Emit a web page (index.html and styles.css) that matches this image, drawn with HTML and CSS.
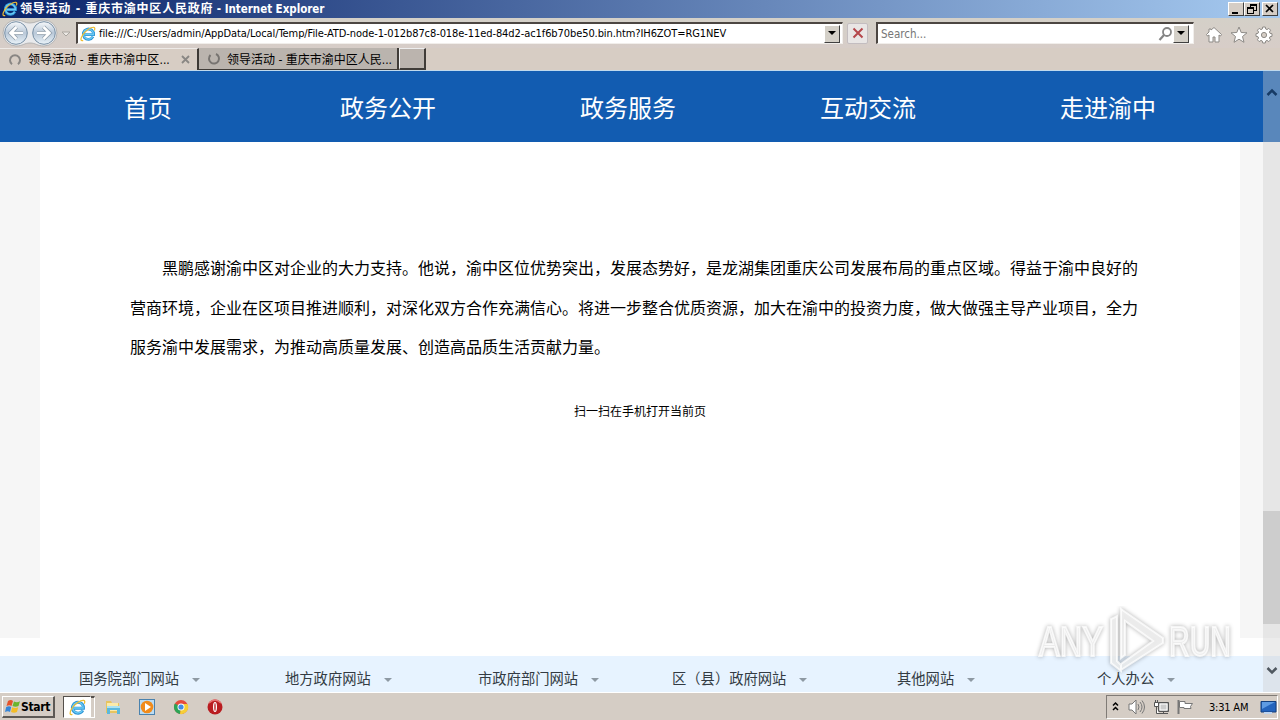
FILE: index.html
```html
<!DOCTYPE html>
<html lang="zh-CN">
<head>
<meta charset="utf-8">
<title>领导活动 - 重庆市渝中区人民政府</title>
<link rel="stylesheet" href="styles.css">
</head>
<body>
<svg class="defs" width="0" height="0">
  <defs>
    <linearGradient id="orb" x1="0" y1="0" x2="0" y2="1"><stop offset="0" stop-color="#f7f9fb"/><stop offset=".5" stop-color="#b9c8d8"/><stop offset="1" stop-color="#eaf3f9"/></linearGradient>
    <symbol id="ie" viewBox="0 0 16 16">
      <path d="M13 10.700A5.200 5.200 0 1 1 13.600 8.700H4.500" fill="none" stroke="#2d95d6" stroke-width="2.800"/>
      <path d="M12.700 10.700A5 5 0 1 1 13.400 8.500H4.500" fill="none" stroke="#6ccaf4" stroke-width="1.300"/>
      <path d="M3.200 14.500C.6 15.300.2 13 2.500 9.200 5.500 4.600 11 .9 13.800 1.300c1.400.3 1.200 1.800.5 3.200" fill="none" stroke="#eebd32" stroke-width="1.200"/>
    </symbol>
  </defs>
</svg>
<div class="screen">
  <header class="titlebar">
    <svg class="title-icon" width="16" height="16"><use href="#ie"/></svg>
    <span class="title-text"><span class="title-cjk">领导活动 - 重庆市渝中区人民政府</span> - Internet Explorer</span>
    <div class="window-buttons">
      <span class="win-btn"><svg width="14" height="12"><path d="M3 9h6v2H3z"/></svg></span>
      <span class="win-btn"><svg width="14" height="12"><path d="M5 1h7v7H9V7h2V3H6v1H5zM2 4h7v7H2zM3 6v4h5V6z" fill-rule="evenodd"/></svg></span>
      <span class="win-btn close"><svg width="14" height="12"><path d="M3 2l7 7M10 2L3 9" stroke="#000" stroke-width="1.700"/></svg></span>
    </div>
  </header>

  <div class="toolbar">
    <svg class="nav-orbs" width="74" height="30" viewBox="0 0 74 30">
      <path d="M15 2C22 2 23 5 29 5S37 2 43 2A13 13 0 0 1 43 28C36 28 35 25 29 25S22 28 15 28A13 13 0 0 1 15 2" fill="#e9eaec" stroke="#aaa" stroke-width=".8"/>
      <circle cx="15" cy="15" r="11.300" fill="url(#orb)" stroke="#7890a6"/>
      <circle cx="43" cy="15" r="11.300" fill="url(#orb)" stroke="#7890a6"/>
      <path d="M22 15H10M15.500 9l-6 6 6 6M36 15h12M42.500 9l6 6-6 6" fill="none" stroke="#8d9ba9" stroke-width="4"/>
      <path d="M22 15H10M15.500 9l-6 6 6 6M36 15h12M42.500 9l6 6-6 6" fill="none" stroke="#fff" stroke-width="2.600"/>
      <path d="M61 14h8l-4 4z" fill="#ece9e5" stroke="#aaa6a0"/>
    </svg>
    <div class="field address">
      <svg width="16" height="16"><use href="#ie"/></svg>
      <span class="url">file:///C:/Users/admin/AppData/Local/Temp/File-ATD-node-1-012b87c8-018e-11ed-84d2-ac1f6b70be50.bin.htm?IH6ZOT=RG1NEV</span>
      <span class="drop"><svg width="9" height="5"><path d="M0 0h8L4 4z"/></svg></span>
    </div>
    <span class="stop"><svg width="12" height="12"><path d="M1.500 1.500l9 9M10.500 1.500l-9 9" stroke="#b5474b" stroke-width="2"/></svg></span>
    <div class="field search">
      <span class="placeholder">Search...</span>
      <svg width="15" height="16" viewBox="0 0 15 16"><circle cx="9" cy="6" r="4" fill="none" stroke="#858585" stroke-width="1.800"/><path d="M6 9l-4.500 5" stroke="#858585" stroke-width="2.200"/></svg>
      <span class="drop"><svg width="9" height="5"><path d="M0 0h8L4 4z"/></svg></span>
    </div>
    <div class="tools">
      <svg width="18" height="18" viewBox="0 0 18 18"><path d="M9 1.500l7.500 7-1 1.500-1.500-1v7h-4v-5H8v5H4V9l-1.500 1-1-1.500L4 6V3h2v1z" fill="#fff" stroke="#8d8a86"/></svg>
      <svg width="18" height="18" viewBox="0 0 18 18"><path d="M9 1l2.200 5.500 5.800.3-4.500 3.700 1.500 5.800L9 13.200l-5 3.100 1.500-5.800L1 6.800l5.800-.3z" fill="#fff" stroke="#8d8a86"/></svg>
      <svg width="18" height="18" viewBox="0 0 18 18"><path d="M7.700 1h2.600l.4 2 1.300.6 1.800-1.200 1.800 1.800-1.200 1.800.6 1.300 2 .4v2.600l-2 .4-.6 1.300 1.200 1.800-1.800 1.800-1.800-1.200-1.300.6-.4 2H7.700l-.4-2-1.300-.6-1.800 1.200-1.800-1.800L3.600 12 3 10.700l-2-.4V7.700l2-.4L3.600 6 2.400 4.200l1.800-1.800L6 3.600 7.300 3z" fill="#fff" stroke="#8d8a86"/><circle cx="9" cy="9" r="2.600" fill="#d5cdc5" stroke="#8d8a86"/></svg>
    </div>
  </div>

  <div class="tabs">
    <div class="tab active">
      <svg width="14" height="14"><path d="M4 11.200A5 5 0 1 1 10 11.200" fill="none" stroke="#898683" stroke-width="2"/></svg>
      <span>领导活动 - 重庆市渝中区...</span>
      <svg class="tab-close" width="9" height="9"><path d="M1 1l7 7M8 1L1 8" stroke="#8a8784" stroke-width="1.800"/></svg>
    </div>
    <div class="tab inactive">
      <svg width="14" height="14"><path d="M3.500 3A5 5 0 1 0 9 2" fill="none" stroke="#777471" stroke-width="2"/></svg>
      <span>领导活动 - 重庆市渝中区人民...</span>
    </div>
    <div class="new-tab"></div>
  </div>

  <main class="page">
    <nav class="site-nav">
      <a>首页</a><a>政务公开</a><a>政务服务</a><a>互动交流</a><a>走进渝中</a>
    </nav>
    <section class="content">
      <article class="sheet">
        <p class="line first">黑鹏感谢渝中区对企业的大力支持。他说，渝中区位优势突出，发展态势好，是龙湖集团重庆公司发展布局的重点区域。得益于渝中良好的</p>
        <p class="line">营商环境，企业在区项目推进顺利，对深化双方合作充满信心。将进一步整合优质资源，加大在渝中的投资力度，做大做强主导产业项目，全力</p>
        <p class="line last">服务渝中发展需求，为推动高质量发展、创造高品质生活贡献力量。</p>
        <p class="scan">扫一扫在手机打开当前页</p>
      </article>
    </section>
    <footer class="links">
      <span class="link">国务院部门网站<i></i></span>
      <span class="link">地方政府网站<i></i></span>
      <span class="link">市政府部门网站<i></i></span>
      <span class="link">区（县）政府网站<i></i></span>
      <span class="link">其他网站<i></i></span>
      <span class="link">个人办公<i></i></span>
    </footer>
    <div class="scrollbar">
      <svg class="up" width="12" height="9"><path d="M1.500 7L6 2.500 10.500 7" fill="none" stroke="#173b66" stroke-width="2.500"/></svg>
      <div class="thumb"></div>
      <svg class="down" width="12" height="9"><path d="M1.500 2L6 6.500 10.500 2" fill="none" stroke="#505860" stroke-width="2.500"/></svg>
    </div>
    <svg class="watermark" width="210" height="76" viewBox="0 0 210 76">
      <g class="mark">
        <text x="5" y="50" textLength="64" lengthAdjust="spacingAndGlyphs">ANY</text>
        <text x="135" y="50" textLength="62" lengthAdjust="spacingAndGlyphs">RUN</text>
        <path d="M77 57V13l6-3v45l4 4v6zM87 3l42 29v5L87 64v-6l32-23-28-20v34l-4 3z"/>
      </g>
    </svg>
  </main>

  <div class="taskbar">
    <div class="start">
      <svg width="17" height="16" viewBox="0 0 17 16"><path d="M4 2q3-2 5 0L7.500 7q-2-1.500-5 0z" fill="#e5532b"/><path d="M10 2.500q3 1.500 6-.3L14.500 7q-3 1.500-6 0z" fill="#6bb52e"/><path d="M2.200 8q3-1.500 5 0L6 13q-2-1.500-5 0z" fill="#3585d8"/><path d="M8.200 8.200q3 1.500 6 0L13 13q-3 1.500-6 0z" fill="#f4bd27"/></svg>
      <span>Start</span>
    </div>
    <div class="task-active"><svg width="17" height="17"><use href="#ie"/></svg></div>
    <div class="task-split"></div>
    <div class="quick">
      <svg width="18" height="18" viewBox="0 0 18 18"><path d="M2 3h5l1 2h7v10H2z" fill="#e7c45f"/><path d="M3 5h11v8H3z" fill="#fbeaaa"/><path d="M3 9h13v7h-3v-4H6v4H3z" fill="#5cb8dc"/><path d="M3 9h13" stroke="#a9e2f3" stroke-width="2"/></svg>
      <svg width="18" height="18" viewBox="0 0 18 18"><rect x="1.500" y="1.500" width="15" height="15" fill="#bbdcf4" stroke="#4a82ae"/><circle cx="9" cy="9" r="6.300" fill="#f18b1b"/><path d="M7 5l6 4-6 4z" fill="#fff"/></svg>
      <svg width="18" height="18" viewBox="0 0 18 18"><circle cx="9" cy="9" r="7" fill="#e64b3c"/><path d="M9 9L2.900 5.500A7 7 0 0 0 8 16z" fill="#2ca456"/><path d="M9 9l-1 7A7 7 0 0 0 15.500 6H9z" fill="#f6cf36"/><circle cx="9" cy="9" r="3.500" fill="#fff"/><circle cx="9" cy="9" r="2.600" fill="#438ce5"/></svg>
      <svg width="18" height="18" viewBox="0 0 18 18"><circle cx="9" cy="9" r="7.500" fill="#b91c20"/><path d="M3 5q6-6 12 0" fill="none" stroke="#e87575" stroke-width="1.500"/><ellipse cx="9" cy="9" rx="2" ry="5" fill="#fff"/><ellipse cx="9" cy="9" rx=".7" ry="4" fill="#b91c20"/></svg>
    </div>
    <div class="tray">
      <svg class="chevrons" width="8" height="12"><path d="M1 4.500L3.500 2 6 4.500M1 9l2.500-2.500L6 9" fill="none" stroke="#000" stroke-width="1.500"/></svg>
      <svg width="18" height="16" viewBox="0 0 18 16"><path d="M1 5h3l4-4v14l-4-4H1z" fill="#fff" stroke="#777"/><path d="M10 5q2 3 0 6M12 3q4 5 0 10M14 1.500q5 6.500 0 13" fill="none" stroke="#777"/></svg>
      <svg width="17" height="16" viewBox="0 0 17 16"><path d="M5.500 3.500h10v9h-10z" fill="#aaa" stroke="#555"/><path d="M7 5h7v6H7z" fill="#ccc" stroke="#fff"/><path d="M6 14.500h9M10.500 13v2" stroke="#555"/><path d="M1.500 3.500h4v4h-4zM2.500 1v2M4.500 1v2M3.500 8v6.500H6" fill="#fff" stroke="#555"/></svg>
      <svg width="17" height="16" viewBox="0 0 17 16"><path d="M1.500 1v14" stroke="#777" stroke-width="2"/><path d="M2.500 2.500H8v2h7.500l-2 3 .5 2H7v-1H2.500z" fill="#fff" stroke="#777"/></svg>
      <span class="clock">3:31 AM</span>
      <svg class="desk" width="17" height="13" viewBox="0 0 17 13"><path d="M1 .5h15V11H1z" fill="#2464bd" stroke="#123f7e"/><path d="M2 1h13L2 8z" fill="#5e9be3"/><path d="M4 12h8" stroke="#bed4ef" stroke-width="2"/></svg>
    </div>
  </div>
</div>
</body>
</html>
```
FILE: styles.css
```css
* { box-sizing: border-box; }
body { margin: 0; font-family: "DejaVu Sans Condensed", "DejaVu Sans", "Noto Sans CJK SC", sans-serif; color: #000; }
svg { display: block; flex: none; }
p { margin: 0; }
.defs { position: absolute; }
.screen { width: 1280px; height: 720px; display: flex; flex-direction: column; overflow: hidden; background: #d5cdc5; white-space: nowrap; }

.titlebar { height: 18px; display: flex; align-items: center; padding: 0 2px; background: linear-gradient(90deg, #0a246a, #a6caf0); color: #fff; }
.title-icon { width: 16px; }
.title-text { margin-left: 2px; flex: 1; font: bold 11.500px/18px "DejaVu Sans Condensed", "Noto Sans CJK SC", sans-serif; letter-spacing: -.03px; }
.title-cjk { font-size: 12px; letter-spacing: .78px; }
.window-buttons { display: flex; }
.win-btn { width: 16px; height: 14px; background: #d5cdc5; border: 1px solid; border-color: #fff #404040 #404040 #fff; }
.win-btn.close { margin-left: 2px; }

.toolbar { height: 30px; display: flex; align-items: center; border-top: 1px solid #d4d0c8; background: linear-gradient(#d4d0c8, #d7cdc8); }
.nav-orbs { width: 76px; margin-top: -1px; }
.field { height: 22px; display: flex; align-items: center; background: #fff; border: 1px solid; border-width: 2px 1px 1px 2px; border-color: #4c4642 #f1eeeb #f1eeeb #4c4642; }
.address { width: 767px; padding: 0 2px 0 2px; margin-top: -1px; }
.url { flex: 1; margin-left: 3px; font-size: 11px; letter-spacing: -.085px; }
.drop { width: 16px; height: 18px; flex: none; display: flex; align-items: center; justify-content: center; background: #d4d0c8; border: 1px solid; border-color: #fff #404040 #404040 #fff; }
.stop { width: 21px; height: 21px; margin: -1px 8px 0 4px; display: flex; align-items: center; justify-content: center; background: #e9e6e5; border: 1px solid #c3bdc0; border-radius: 2px; }
.search { width: 318px; padding: 0 4px 0 3px; margin-top: -1px; }
.placeholder { flex: 1; color: #767676; font-size: 11.500px; letter-spacing: 0; }
.tools { display: flex; gap: 7px; margin: 3px 0 0 11px; }

.tabs { height: 23px; display: flex; background: #d7cdc4; border-bottom: 1px solid #bfd9ed; font: 12px/22px "DejaVu Sans Condensed", "Noto Sans CJK SC", sans-serif; }
.tab { display: flex; align-items: center; }
.tab.active { width: 199px; padding: 0 8px; border-top: 1px solid #eeeae7; border-right: 2px solid #3d3935; }
.tab.active span { width: 144px; margin-left: 6px; letter-spacing: .05px; }
.tab-close { margin-left: 11px; }
.tab.inactive { width: 200px; height: 22px; padding-left: 8px; background: #bab4ae; border: solid #403c38; border-width: 0 2px 1px 0; }
.tab.inactive span { margin: 2px 0 0 6px; }
.new-tab { width: 27px; height: 22px; background: #bbb4ae; border: 1px solid; border-width: 1px 2px 2px 1px; border-color: #eee #403c38 #403c38 #eee; }

.page { position: relative; height: 621px; background: #fff; font-family: "Noto Sans CJK SC", sans-serif; }
.site-nav { height: 71px; padding: 0 0 0 28px; display: grid; grid-template-columns: repeat(5, 240px); align-items: center; text-align: center; background: #125cb1; color: #fff; font-size: 24px; line-height: 36px; }
.site-nav a { margin-top: 1px; }
.content { height: 496px; padding: 0 40px; background: #f6f6f6; }
.sheet { height: 496px; padding: 106px 90px 0; background: #fff; font-size: 16px; line-height: 39.500px; }
.line { width: 1008px; text-align: left; }
.first { padding-left: 32px; }
.scan { margin-top: 31px; font-size: 12px; line-height: 26px; text-align: center; }
.links { height: 36px; margin-top: 18px; padding-left: 79px; display: grid; grid-template-columns: 206px 193px 194px 225px 200px 120px; background: #e7f3ff; font-size: 14.300px; line-height: 42px; color: #333b43; }
.link { display: flex; align-items: center; height: 43px; }
.link i { margin: 4px 0 0 13px; border: 4px solid transparent; border-top-color: #8e99a3; border-bottom: 0; }
.scrollbar { position: absolute; top: 0; right: 0; bottom: 0; width: 17px; background: rgba(205, 205, 205, .38); display: flex; flex-direction: column; align-items: center; }
.up { margin-top: 17px; }
.thumb { width: 17px; height: 113px; margin-top: 414px; background: #cdcdcd; }
.down { margin-top: 42px; }
.watermark { position: absolute; left: 1034px; top: 535px; }
.mark { fill: rgba(255, 255, 255, .7); stroke: rgba(255, 255, 255, .75); stroke-width: 2; font: 43px "Liberation Sans", sans-serif; filter: drop-shadow(0 0 2px rgba(0, 0, 0, .38)); }

.taskbar { height: 28px; padding-top: 1px; display: flex; align-items: center; background: #d5cdc5; border-top: 1px solid #fff; }
.start { width: 53px; height: 22px; margin-left: 2px; padding-left: 1px; display: flex; align-items: center; border: 1px solid; border-width: 1px 2px 2px 1px; border-color: #fff #5d5955 #5d5955 #fff; font: bold 12px "DejaVu Sans Condensed", sans-serif; letter-spacing: -.3px; }
.task-active { width: 28px; height: 22px; margin-left: 8px; display: flex; align-items: center; justify-content: center; background: #fff; border: 1px solid; border-color: #55504c #fff #fff #55504c; }
.task-split { width: 4px; height: 22px; border: solid #fff; border-width: 0 1px 1px 0; border-top: 2px solid #55504c; }
.quick { display: flex; gap: 16px; margin-left: 9px; }
.tray { width: 172px; height: 24px; margin-left: auto; margin-right: 2px; padding-left: 5px; display: flex; align-items: center; border: 1px solid; border-color: #807b76 #fff #fff #807b76; }
.chevrons { margin-right: 8px; }
.tray svg + svg { margin-right: 7px; }
.clock { width: 44px; margin-left: 8px; font-size: 11px; letter-spacing: -.2px; }
.desk { margin-left: 7px; }
```
